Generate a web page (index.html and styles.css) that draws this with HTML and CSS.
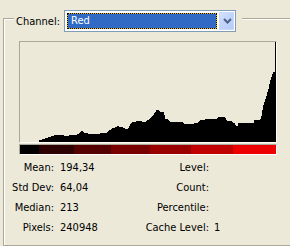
FILE: index.html
```html
<!DOCTYPE html>
<html>
<head>
<meta charset="utf-8">
<link rel="stylesheet" href="styles.css">
</head>
<body>
<div class="panel">
  <div class="group">
    <div class="legend">
      <span class="legend-label">Channel:</span>
      <div class="select">
        <div class="select-value">Red</div>
        <div class="select-btn">
          <svg width="9" height="6" viewBox="0 0 9 6"><polyline points="1,1 4.5,4.5 8,1" fill="none" stroke="#4D6185" stroke-width="2"/></svg>
        </div>
      </div>
    </div>
    <div class="histo">
      <svg width="256" height="100" viewBox="0 0 256 100" shape-rendering="crispEdges">
        <polygon fill="#000" points="19,100 19,98 23,97.3 26.7,96 30,94.7 33,93.7 37,93 43,93 45,94.3 48,94.3 50,92.7 57,92.7 60,90.7 62,89 64,90.7 67,90.7 68,92.3 80,92.3 80,91.3 87,91.3 88,89.3 92,86.7 95,85.3 98,84.3 103,85.3 105,86.7 108,86.7 110,82.7 113,80 119,79 125,80 126.7,78.7 130,76.7 133.3,73 136.7,68 138.3,68 140,69.7 143.3,69.7 144.3,72 145.7,77.3 148.3,77.3 150,79.7 153.3,79.7 155,80.3 163.3,80.3 165,82.3 173.3,82.3 175,80.7 178.3,80.7 180,78 185,78 185,76.7 196.7,76.7 198.3,75.3 205,75.3 206.7,78.7 211.7,78.7 213.3,80.7 215,80.7 215.7,83.7 217.7,83.7 218.3,81.3 233.3,81.3 234.3,78 240,78 241.7,73 243.3,64 245,58 246.7,53 248.3,48 250,39.7 251.7,34.7 253.3,29.7 255,30 255,0 256,0 256,100"/>
      </svg>
    </div>
    <div class="colorbar"></div>
    <div class="stats">
      <div class="lbl">Mean:</div><div class="val">194,34</div><div class="lbl">Level:</div><div class="val2"></div>
      <div class="lbl">Std Dev:</div><div class="val">64,04</div><div class="lbl">Count:</div><div class="val2"></div>
      <div class="lbl">Median:</div><div class="val">213</div><div class="lbl">Percentile:</div><div class="val2"></div>
      <div class="lbl">Pixels:</div><div class="val">240948</div><div class="lbl">Cache Level:</div><div class="val2">1</div>
    </div>
  </div>
</div>
</body>
</html>
```
FILE: styles.css
```css
html, body {
  margin: 0;
  padding: 0;
  background: #ECE9D8;
  overflow: hidden;
}
body {
  width: 290px;
  height: 246px;
  font-family: "DejaVu Sans Condensed", "DejaVu Sans", sans-serif;
  font-size: 11px;
  color: #000;
}
.panel {
  padding: 18px 0 0 3px;
}
.group {
  height: 228px;
  box-sizing: border-box;
  border: 1px solid #ACA899;
  border-right: none;
  box-shadow: inset 1px 1px 0 #fff;
}
.legend {
  display: inline-flex;
  align-items: center;
  margin: -9px 0 0 10px;
  padding: 0 6px 0 2px;
  height: 22px;
  background: #ECE9D8;
  vertical-align: top;
}
.legend-label {
  margin-right: 6px;
  width: 42px;
  white-space: nowrap;
}
.select {
  display: flex;
  width: 172px;
  height: 22px;
  box-sizing: border-box;
  border: 1px solid #7F9DB9;
  background: #fff;
  padding: 1px;
}
.select-value {
  width: 150px;
  height: 16px;
  margin: 1px;
  box-sizing: border-box;
  border: 1px dotted #000;
  background: linear-gradient(#316AC5, #316AC5) padding-box, #E8B800 border-box;
  color: #fff;
  padding-left: 3px;
  line-height: 14px;
}
.select-btn {
  width: 15px;
  height: 18px;
  margin-left: 1px;
  box-sizing: border-box;
  background: linear-gradient(135deg, #D6E3FD 0%, #C3D4FB 45%, #B7CBF7 100%);
  border: 1px solid #C8D8FB;
  display: flex;
  align-items: center;
  justify-content: center;
}
.select-btn svg {
  display: block;
  margin-left: 1px;
}
.histo {
  margin: 9px 0 0 15px;
  width: 256px;
  height: 100px;
  border-top: 1px solid #ACA899;
  border-left: 1px solid #ACA899;
  border-bottom: 1px solid #fff;
  border-right: 1px solid #fff;
}
.histo svg {
  display: block;
}
.colorbar {
  margin: 1px 0 0 15px;
  width: 256px;
  height: 9px;
  border-top: 1px solid #ACA899;
  border-left: 1px solid #ACA899;
  border-bottom: 1px solid #fff;
  border-right: 1px solid #fff;
  background: linear-gradient(to right,
    #000 0, #000 19px,
    #2C0000 19px, #2C0000 54px,
    #540000 54px, #540000 91px,
    #790000 91px, #790000 130px,
    #9A0000 130px, #9A0000 171px,
    #C10000 171px, #C10000 213px,
    #EE0000 213px, #EE0000 256px);
}
.stats {
  display: grid;
  grid-template-columns: 50px 90px 65px 1fr;
  grid-auto-rows: 20px;
  line-height: 20px;
  margin-top: 3px;
  white-space: nowrap;
}
.lbl {
  text-align: right;
}
.val {
  padding-left: 6px;
}
.val2 {
  padding-left: 5px;
}
```
